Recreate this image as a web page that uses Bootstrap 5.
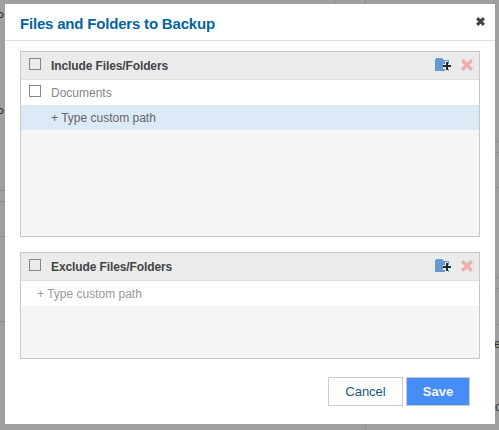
<!DOCTYPE html>
<html lang="en">
<head>
<meta charset="utf-8">
<meta name="viewport" content="width=device-width, initial-scale=1">
<title>Files and Folders to Backup</title>
<link href="https://cdn.jsdelivr.net/npm/bootstrap@5.3.0/dist/css/bootstrap.min.css" rel="stylesheet">
<style>
  body { background: #9f9f9f; font: 12px/16px "Liberation Sans", Arial, sans-serif; color: #444; height: 430px; }
  .backdrop-page { inset: 0; color: #333; }
  .backdrop-page span, .backdrop-page i { position: absolute; }
  .backdrop-page i { background: #8e8e8e; }
  .dialog { width: 490px; height: 420px; margin: 4px 0 0 5px; z-index: 1; }
  .dialog-head { height: 37px; padding: 2px 10px 0 15px; border-bottom: 1px solid #dcdcdc; }
  .dialog-title { font-size: 15px; line-height: 18px; font-weight: 700; letter-spacing: -.19px; padding-top: 2px; color: #05659e; }
  .dialog-close { margin-bottom: 3px; }
  .dialog-body { padding: 10px 15px 0; }
  .pane { border: 1px solid #c8c8c8; background: #f5f5f5; }
  .pane-include { height: 186px; margin-bottom: 15px; }
  .pane-exclude { height: 107px; }
  .pane-head { height: 28px; background: #ebebeb; border-bottom: 1px solid #dcdcdc; padding: 0 6px 0 8px; font-weight: 700; letter-spacing: -.11px; }
  .pane-row { height: 25px; padding-left: 8px; color: #858585; }
  .pane-row.active-row { background: #dceaf7; padding-left: 30px; color: #666; }
  .pane-row.empty-row { padding-left: 16px; color: #999; }
  .form-check-input.box { width: 12px; height: 12px; margin: 0 10px 3px 0; border: 1px solid #858585; border-radius: 0; background-color: transparent; }
  .icon-btn { line-height: 0; }
  .add-btn { margin: 0 9px 1px 0; }
  .remove-btn { margin-bottom: 1px; }
  .btn-dlg { --bs-btn-border-radius: 0; --bs-btn-font-size: 13px; --bs-btn-line-height: 17px; --bs-btn-padding-y: 5px; --bs-btn-padding-x: 0; --bs-btn-border-color: #ccc; height: 29px; }
  .btn-cancel { --bs-btn-color: #17577f; --bs-btn-bg: #fff; width: 75px; }
  .btn-save { --bs-btn-color: #f2f6ff; --bs-btn-bg: #478df7; width: 64px; font-weight: 700; }
  .dialog-foot { padding: 18px 25px 0; gap: 3px; }
</style>
</head>
<body class="overflow-hidden">
<div class="backdrop-page position-absolute" aria-hidden="true">
  <i style="left:334px;top:0;width:1px;height:4px"></i><i style="left:365px;top:0;width:1px;height:4px"></i>
  <i style="left:0;top:190px;width:5px;height:1px"></i><i style="left:0;top:201px;width:5px;height:1px"></i>
  <i style="left:0;top:236px;width:5px;height:1px"></i><i style="left:0;top:321px;width:5px;height:1px"></i>
  <i style="left:495px;top:141px;width:4px;height:1px"></i><i style="left:495px;top:152px;width:4px;height:1px"></i>
  <i style="left:495px;top:187px;width:4px;height:1px"></i><i style="left:495px;top:324px;width:4px;height:1px"></i>
  <i style="left:495px;top:277px;width:4px;height:1px"></i><i style="left:495px;top:288px;width:4px;height:1px"></i>
  <i style="left:365px;top:424px;width:1px;height:6px"></i>
  <span style="left:-4px;top:9px">P</span><span style="left:-4px;top:105px">P</span>
  <span style="left:494px;top:336px">e</span><span style="left:495px;top:399px">o</span>
</div>
<main class="dialog bg-white position-relative">
  <header class="dialog-head d-flex align-items-center justify-content-between">
    <h1 class="dialog-title m-0">Files and Folders to Backup</h1>
    <button class="btn p-0 border-0 icon-btn dialog-close" aria-label="Close"><svg width="9" height="9" viewBox="0 0 9 9"><path d="M1.1 1.1 7.9 7.9M7.9 1.1 1.1 7.9" stroke="#444" stroke-width="3"/></svg></button>
  </header>
  <div class="dialog-body">
    <section class="pane pane-include">
      <div class="pane-head d-flex align-items-center">
        <input type="checkbox" class="form-check-input box flex-shrink-0" aria-label="Select all included"><span class="me-auto">Include Files/Folders</span>
        <button class="btn p-0 border-0 icon-btn add-btn" aria-label="Add folder"><svg width="17" height="14" viewBox="0 0 17 14"><path d="M0 1h1V0h6l2 2h5v11H0z" fill="#6699cf"/><path d="M9 2h5v1H9z" fill="#6699cf"/><path d="M10 3h3v3h3v5h-3v3h-3v-3H8V6h2z" fill="#ebebeb"/><path d="M11 4h2v3h3v2h-3v3h-2V9H8V7h3z" fill="#252922"/></svg></button>
        <button class="btn p-0 border-0 icon-btn remove-btn" aria-label="Remove"><svg width="12" height="12" viewBox="0 0 12 12"><path d="M1.2 1.2 10.8 10.8M10.8 1.2 1.2 10.8" stroke="#ecaeae" stroke-width="3.4"/></svg></button>
      </div>
      <div class="pane-row d-flex align-items-center bg-white"><input type="checkbox" class="form-check-input box flex-shrink-0" aria-label="Documents"><span>Documents</span></div>
      <div class="pane-row active-row d-flex align-items-center">+ Type custom path</div>
    </section>
    <section class="pane pane-exclude">
      <div class="pane-head d-flex align-items-center">
        <input type="checkbox" class="form-check-input box flex-shrink-0" aria-label="Select all excluded"><span class="me-auto">Exclude Files/Folders</span>
        <button class="btn p-0 border-0 icon-btn add-btn" aria-label="Add folder"><svg width="17" height="14" viewBox="0 0 17 14"><path d="M0 1h1V0h6l2 2h5v11H0z" fill="#6699cf"/><path d="M9 2h5v1H9z" fill="#6699cf"/><path d="M10 3h3v3h3v5h-3v3h-3v-3H8V6h2z" fill="#ebebeb"/><path d="M11 4h2v3h3v2h-3v3h-2V9H8V7h3z" fill="#252922"/></svg></button>
        <button class="btn p-0 border-0 icon-btn remove-btn" aria-label="Remove"><svg width="12" height="12" viewBox="0 0 12 12"><path d="M1.2 1.2 10.8 10.8M10.8 1.2 1.2 10.8" stroke="#ecaeae" stroke-width="3.4"/></svg></button>
      </div>
      <div class="pane-row empty-row d-flex align-items-center bg-white">+ Type custom path</div>
    </section>
  </div>
  <footer class="dialog-foot d-flex justify-content-end">
    <button class="btn btn-dlg btn-cancel">Cancel</button><button class="btn btn-dlg btn-save">Save</button>
  </footer>
</main>
<script src="https://cdn.jsdelivr.net/npm/bootstrap@5.3.0/dist/js/bootstrap.bundle.min.js"></script>
</body>
</html>
